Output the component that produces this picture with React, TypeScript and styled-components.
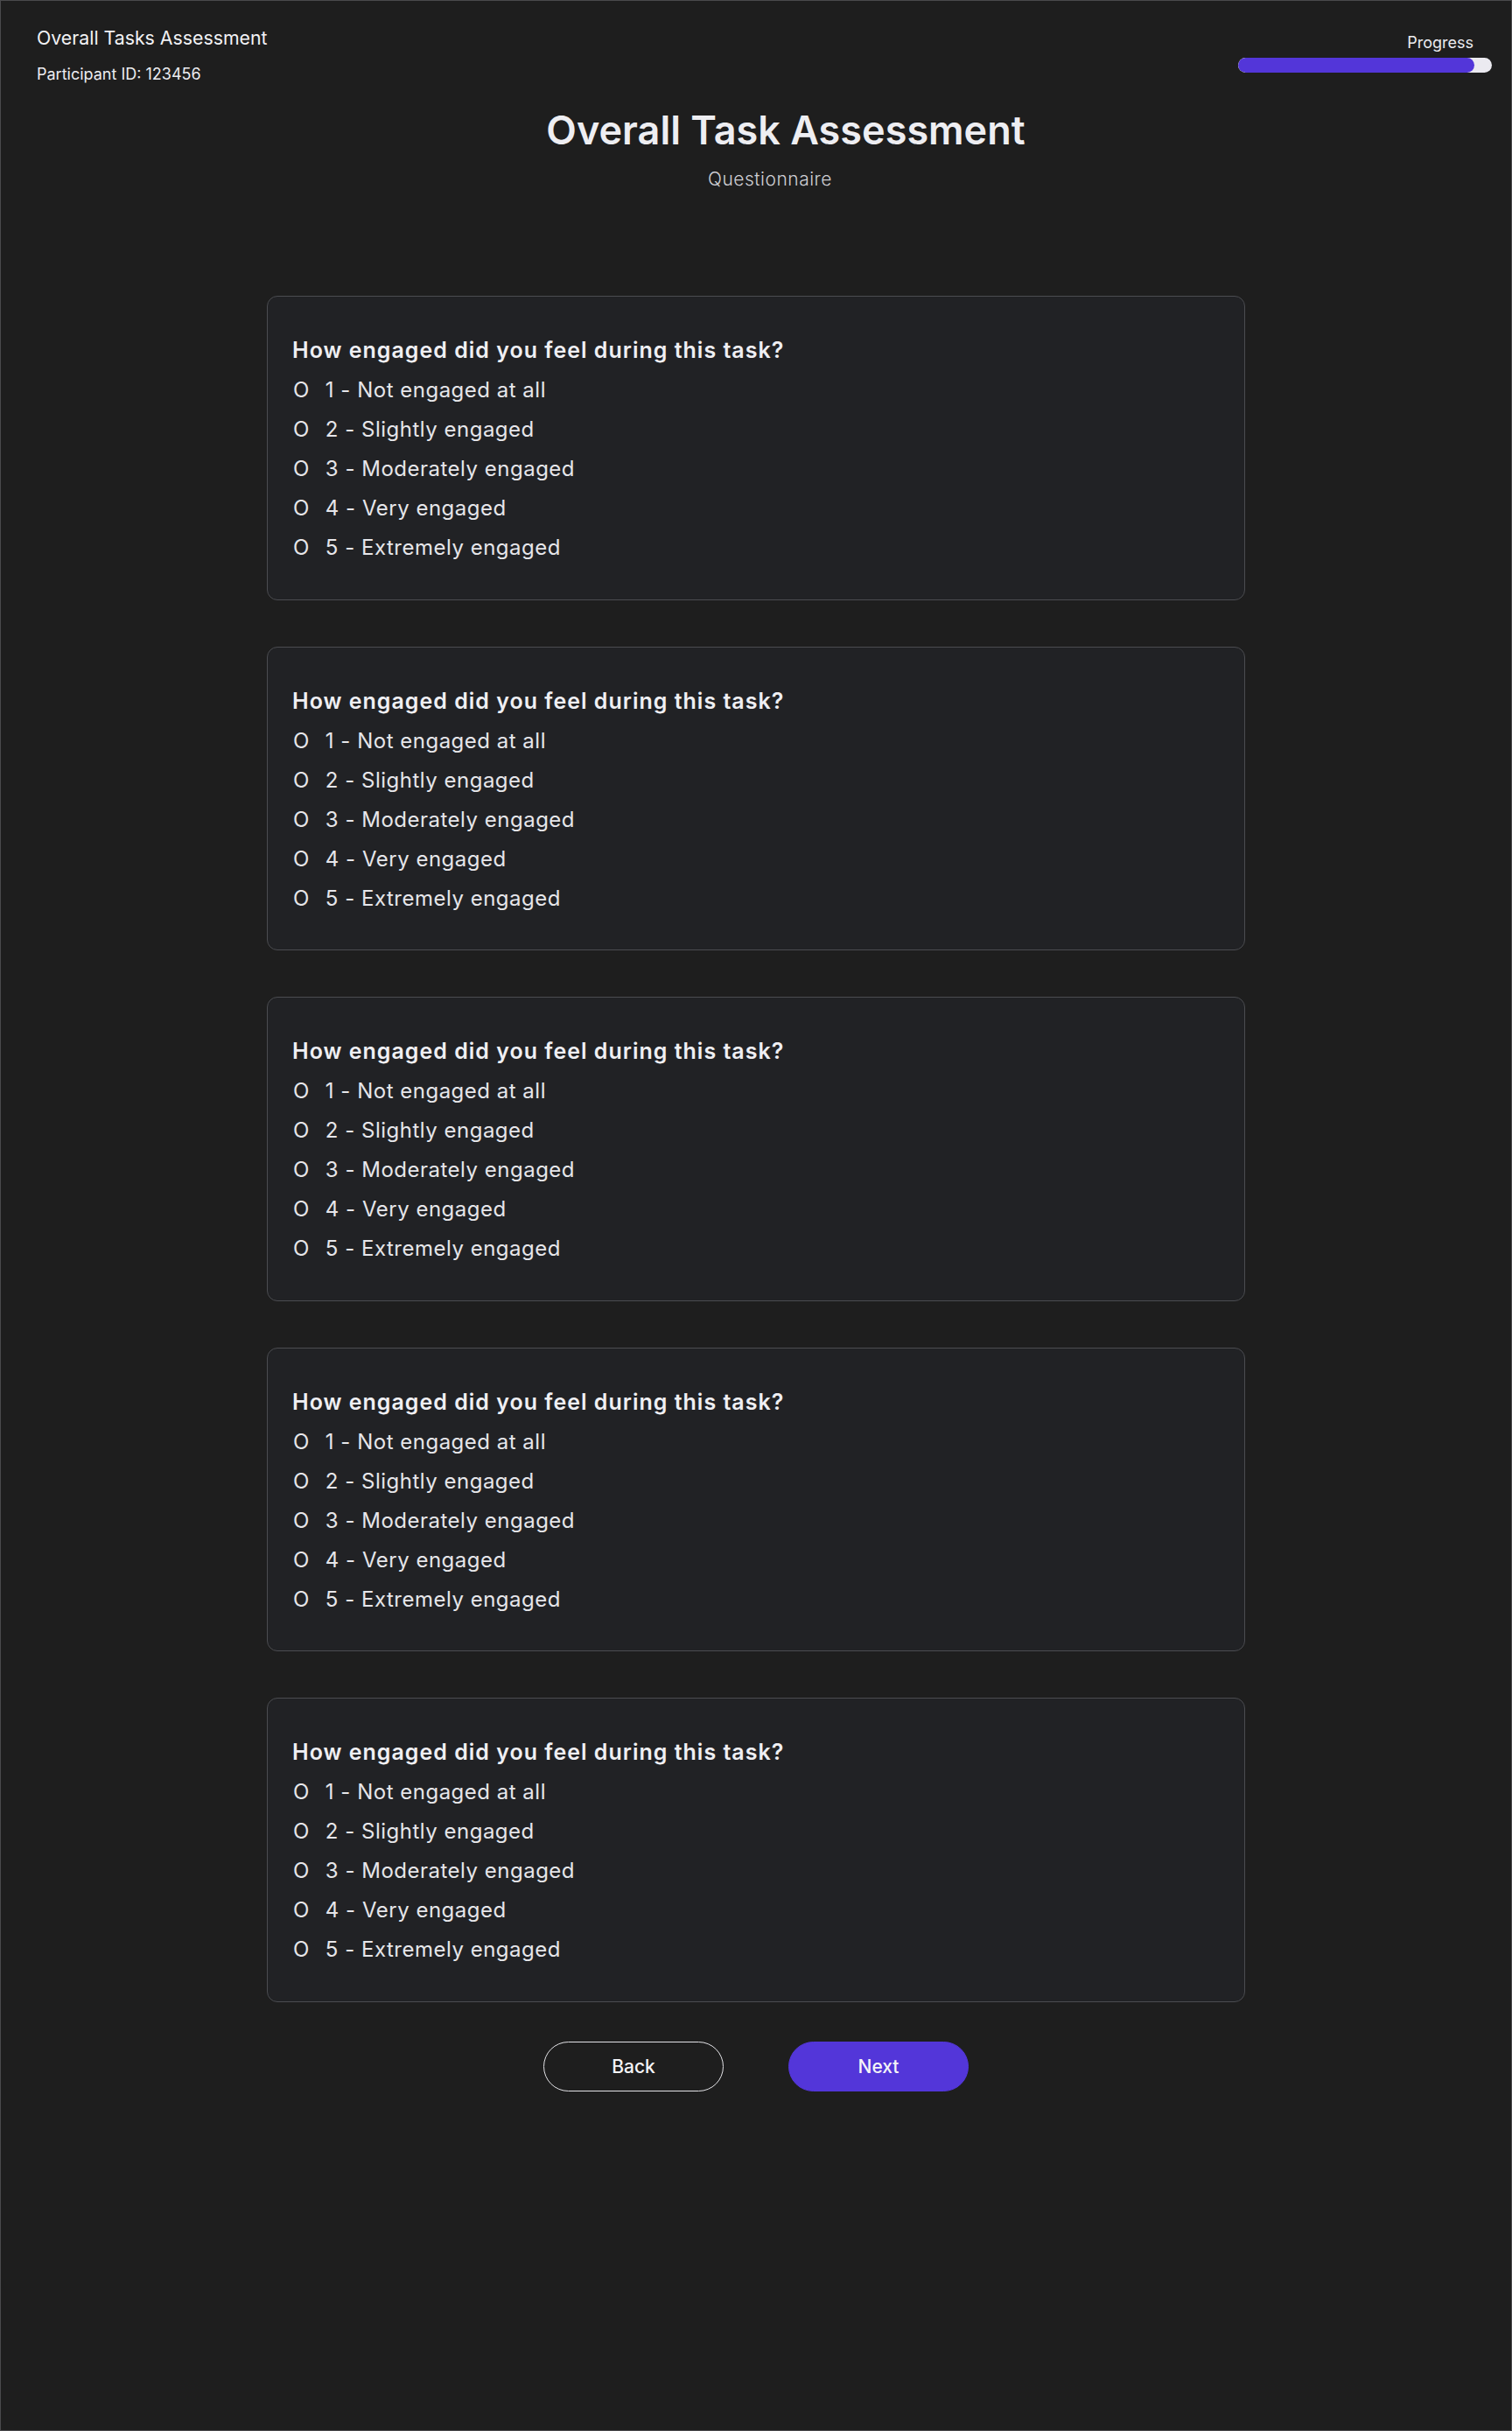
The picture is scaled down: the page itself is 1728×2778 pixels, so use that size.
import React from "react";
import styled, { createGlobalStyle } from "styled-components";

const GlobalStyle = createGlobalStyle`
  * { box-sizing: border-box; }
  html, body { margin: 0; padding: 0; background: #1e1e1e; }
  body { font-family: Inter, "Noto Sans", "Liberation Sans", sans-serif; color: #eeeef2; }
`;

const Page = styled.div`
  min-height: 100vh;
  border: 1px solid #4a4a4c;
  background: #1e1e1e;
  display: flex;
  flex-direction: column;
`;

const TopBar = styled.header`
  display: flex;
  justify-content: space-between;
  align-items: flex-start;
  padding: 29px 22px 0 41px;
`;

const Identity = styled.div`
  display: flex;
  flex-direction: column;
`;

const AppName = styled.div`
  font-size: 21.3px;
  line-height: 26px;
  font-weight: 400;
  color: #f2f2f5;
`;

const Participant = styled.div`
  margin-top: 18px;
  font-size: 18px;
  line-height: 22px;
  font-weight: 400;
  color: #ececf0;
`;

const ProgressBlock = styled.div`
  margin-top: 8px;
  width: 290px;
  display: flex;
  flex-direction: column;
  align-items: flex-end;
`;

const ProgressLabel = styled.div`
  font-size: 18px;
  line-height: 22px;
  color: #ececf0;
  margin-right: 21px;
`;

const Track = styled.div`
  margin-top: 6px;
  width: 100%;
  height: 17px;
  border-radius: 9px;
  background: #ebeaf0;
  overflow: hidden;
`;

const Fill = styled.div`
  height: 100%;
  border-radius: 9px;
  background: #5336d9;
`;

const TitleBlock = styled.div`
  display: flex;
  flex-direction: column;
  align-items: center;
  margin-top: 26px;
`;

const Title = styled.h1`
  margin: 0 0 0 68px;
  font-size: 45px;
  line-height: 54px;
  font-weight: 600;
  color: #eeeef2;
`;

const Subtitle = styled.div`
  margin: 17px 0 0 32px;
  font-size: 21px;
  line-height: 24px;
  font-weight: 300;
  letter-spacing: 0.5px;
  color: #cfcfd4;
`;

const Questions = styled.main`
  width: 1118px;
  margin: 121px auto 0;
  display: flex;
  flex-direction: column;
  gap: 53px;
`;

const Card = styled.section`
  border: 1px solid #4b4c50;
  border-radius: 12px;
  background: #212225;
  padding: 39px 28px 36.5px 28px;
`;

const Question = styled.h2`
  margin: 0;
  font-size: 25px;
  line-height: 45px;
  font-weight: 600;
  letter-spacing: 1px;
  color: #efeff3;
`;

const Option = styled.div`
  font-size: 24px;
  line-height: 45px;
  font-weight: 400;
  letter-spacing: 0.5px;
  color: #e6e6ea;
  display: flex;
  align-items: baseline;
`;

const Mark = styled.span`
  margin-left: 1px;
  margin-right: 18px;
`;

const Actions = styled.div`
  display: flex;
  justify-content: center;
  gap: 74px;
  margin-top: 45px;
`;

const Button = styled.button<{ $primary?: boolean }>`
  width: 206px;
  height: 57px;
  border-radius: 29px;
  font-family: Inter, "Noto Sans", "Liberation Sans", sans-serif;
  font-size: 21px;
  font-weight: 500;
  color: #f4f4f7;
  cursor: pointer;
  background: ${(p) => (p.$primary ? "#5336d9" : "transparent")};
  border: 1px solid ${(p) => (p.$primary ? "#5336d9" : "#e2e2e6")};
`;

const options = [
  "1 - Not engaged at all",
  "2 - Slightly engaged",
  "3 - Moderately engaged",
  "4 - Very engaged",
  "5 - Extremely engaged",
];

export default function App() {
  const progress = 93;
  return (
    <>
      <GlobalStyle />
      <Page>
        <TopBar>
          <Identity>
            <AppName>Overall Tasks Assessment</AppName>
            <Participant>Participant ID: 123456</Participant>
          </Identity>
          <ProgressBlock>
            <ProgressLabel>Progress</ProgressLabel>
            <Track>
              <Fill style={{ width: `${progress}%` }} />
            </Track>
          </ProgressBlock>
        </TopBar>
        <TitleBlock>
          <Title>Overall Task Assessment</Title>
          <Subtitle>Questionnaire</Subtitle>
        </TitleBlock>
        <Questions>
          {[0, 1, 2, 3, 4].map((i) => (
            <Card key={i}>
              <Question>How engaged did you feel during this task?</Question>
              {options.map((o) => (
                <Option key={o}>
                  <Mark>O</Mark>
                  <span>{o}</span>
                </Option>
              ))}
            </Card>
          ))}
        </Questions>
        <Actions>
          <Button>Back</Button>
          <Button $primary>Next</Button>
        </Actions>
      </Page>
    </>
  );
}
